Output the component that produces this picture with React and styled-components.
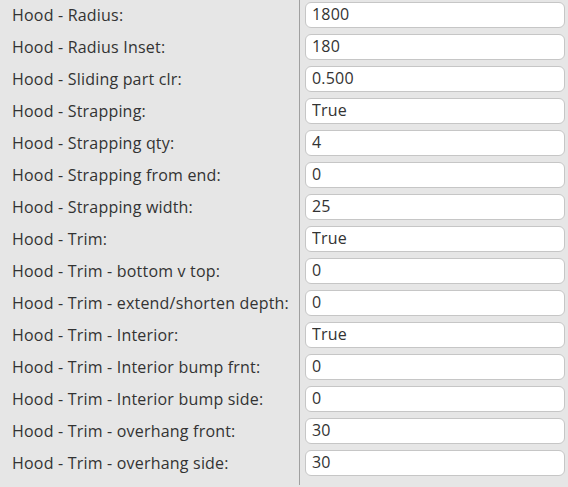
import React from 'react';
import styled, { createGlobalStyle } from 'styled-components';

const GlobalStyle = createGlobalStyle`
  html, body {
    margin: 0;
    padding: 0;
    background: #e6e6e6;
  }
  body {
    font-family: "Open Sans", "Liberation Sans", sans-serif;
    color: #333;
  }
`;

const Sheet = styled.div`
  width: 568px;
  height: 487px;
  background: #e6e6e6;
  overflow: hidden;
`;

const Table = styled.div`
  display: grid;
  grid-template-columns: 300px 1fr;
`;

const Label = styled.div`
  height: 32px;
  display: flex;
  align-items: center;
  padding-left: 12px;
  padding-bottom: 3px;
  box-sizing: border-box;
  border-right: 1px solid #a0a0a0;
  font-size: 16px;
  letter-spacing: 0.2px;
  color: #333;
  white-space: nowrap;
`;

const Cell = styled.div`
  height: 32px;
  padding: 2px 0 0 5px;
  box-sizing: border-box;
`;

const Input = styled.input`
  width: 260px;
  height: 26px;
  box-sizing: border-box;
  border: 1px solid #c6c6c6;
  border-radius: 6px;
  background: #fff;
  padding: 0 6px 2px;
  font-family: "Open Sans", "Liberation Sans", sans-serif;
  font-size: 16px;
  letter-spacing: 0.2px;
  color: #333;
  outline: none;
`;

const Filler = styled.div`
  height: 5px;
  border-right: 1px solid #a0a0a0;
`;

const rows = [
  ['Hood - Radius:', '1800'],
  ['Hood - Radius Inset:', '180'],
  ['Hood - Sliding part clr:', '0.500'],
  ['Hood - Strapping:', 'True'],
  ['Hood - Strapping qty:', '4'],
  ['Hood - Strapping from end:', '0'],
  ['Hood - Strapping width:', '25'],
  ['Hood - Trim:', 'True'],
  ['Hood - Trim - bottom v top:', '0'],
  ['Hood - Trim - extend/shorten depth:', '0'],
  ['Hood - Trim - Interior:', 'True'],
  ['Hood - Trim - Interior bump frnt:', '0'],
  ['Hood - Trim - Interior bump side:', '0'],
  ['Hood - Trim - overhang front:', '30'],
  ['Hood - Trim - overhang side:', '30'],
];

export default function App() {
  return (
    <>
      <GlobalStyle />
      <Sheet>
        <Table>
          {rows.map(([label, value]) => (
            <React.Fragment key={label}>
              <Label>{label}</Label>
              <Cell>
                <Input defaultValue={value} readOnly />
              </Cell>
            </React.Fragment>
          ))}
          <Filler />
        </Table>
      </Sheet>
    </>
  );
}
